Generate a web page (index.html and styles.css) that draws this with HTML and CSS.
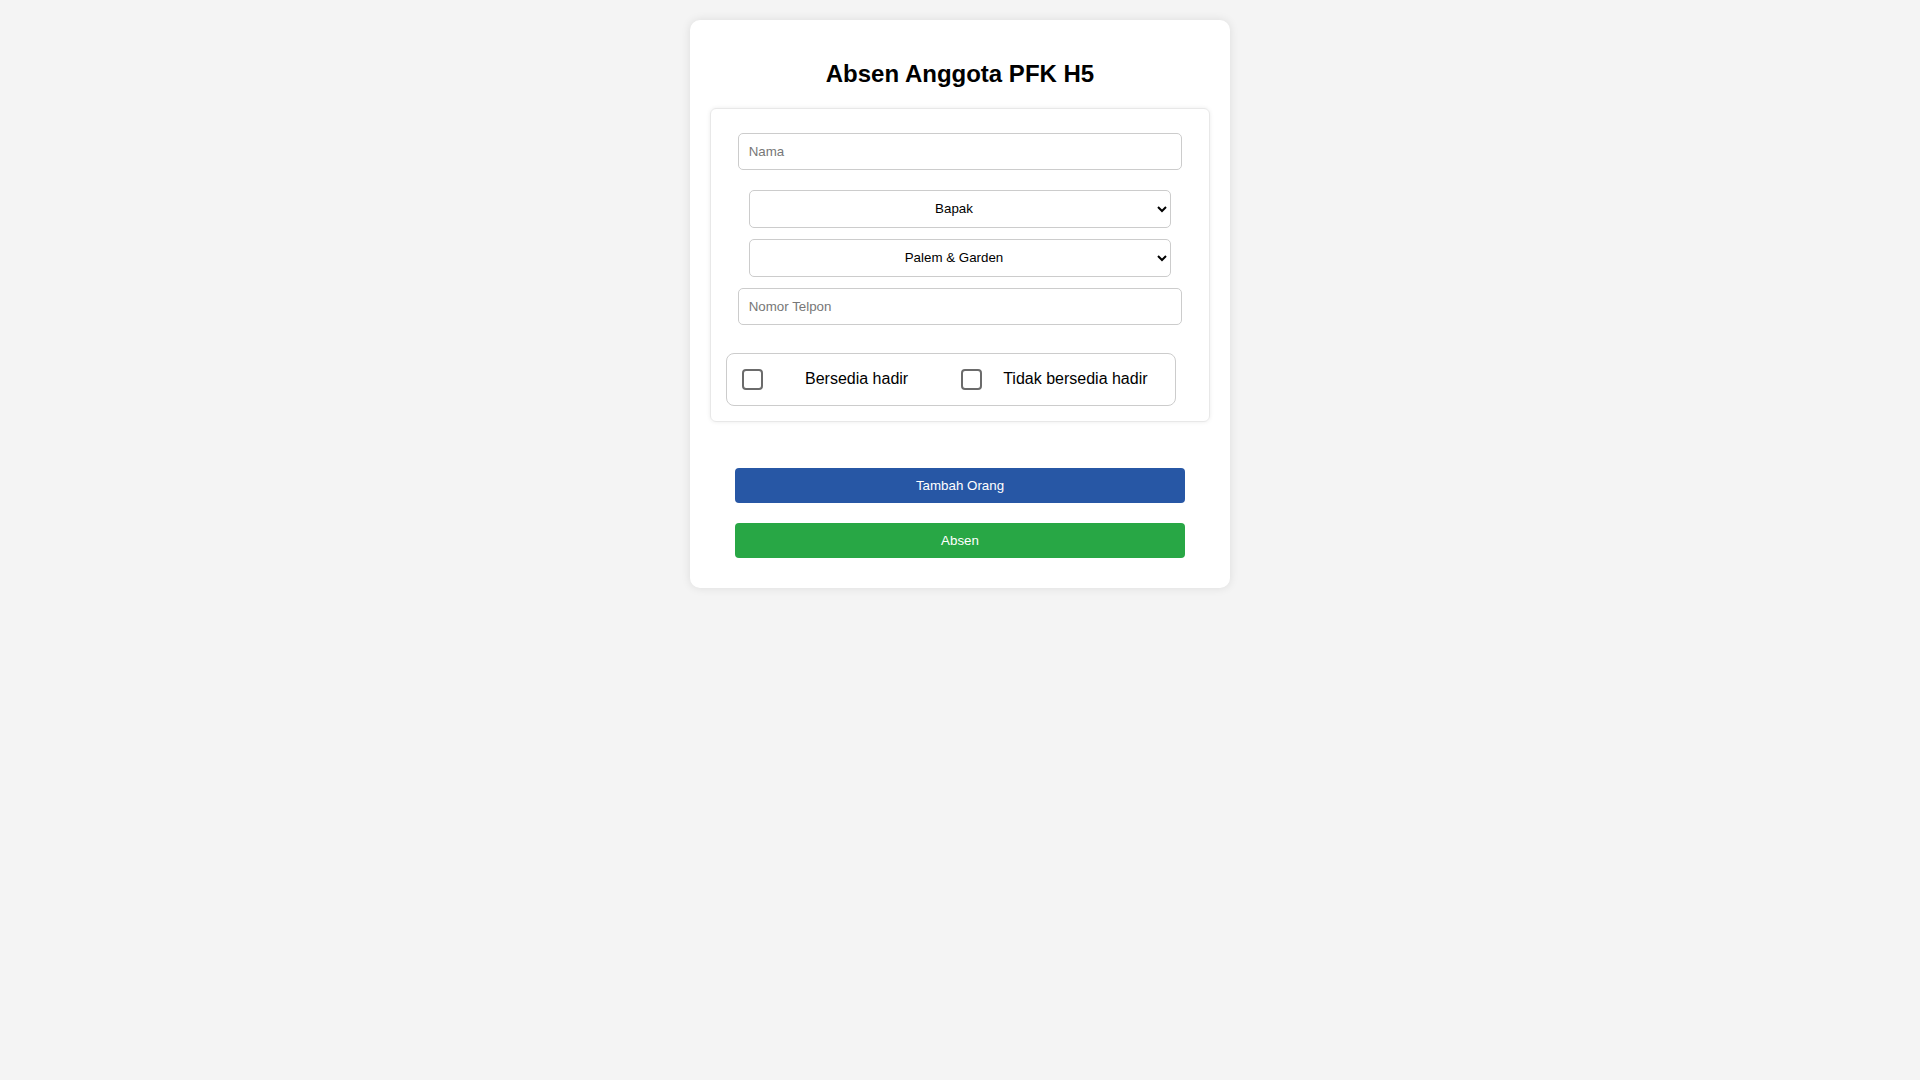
FILE: index.html
```html
<!DOCTYPE html>
<html lang="id">
<head>
    <meta charset="UTF-8">
    <meta name="viewport" content="width=device-width, initial-scale=1.0">
    <title>Absen Anggota PFK H5</title>
    <link rel="stylesheet" href="styles.css">
</head>
<body>

    <div class="container">
        <h2>Absen Anggota PFK H5</h2>

        <div class="person-box">
            <input type="text" class="field" placeholder="Nama">
            <div class="select-group">
                <select class="pick">
                    <option>Bapak</option>
                    <option>Ibu</option>
                </select>
                <select class="pick">
                    <option>Palem &amp; Garden</option>
                </select>
            </div>
            <input type="text" class="field field-phone" placeholder="Nomor Telpon">

            <div class="attend">
                <label class="opt opt-yes">
                    <input type="checkbox">
                    <span>Bersedia hadir</span>
                </label>
                <label class="opt opt-no">
                    <input type="checkbox">
                    <span>Tidak bersedia hadir</span>
                </label>
            </div>
        </div>

        <button type="button" class="btn btn-add">Tambah Orang</button>
        <button type="button" class="btn btn-submit">Absen</button>
    </div>

</body>
</html>
```

FILE: styles.css
```css
body {
    font-family: "Liberation Sans", Arial, sans-serif;
    background-color: #f4f4f4;
    margin: 0;
    padding: 20px 0;
}
.container {
    width: 500px;
    margin: 0 auto;
    padding: 20px;
    background-color: white;
    border-radius: 10px;
    box-shadow: 0 0 10px rgba(0, 0, 0, 0.1);
}
h2 {
    font-size: 24px;
    text-align: center;
    margin: 20px 0;
}
.person-box {
    border: 1px solid #e8e8e8;
    border-radius: 6px;
    box-shadow: 0 0 4px rgba(0, 0, 0, 0.08);
    padding: 15px;
}
.field {
    display: block;
    width: 95%;
    height: 36.5px;
    margin: 10px auto;
    padding: 0 10px;
    box-sizing: border-box;
    font-family: inherit;
    font-size: 13.33px;
    border: 1px solid #ccc;
    border-radius: 5px;
}
.field:first-child {
    margin-top: 9px;
    margin-bottom: 20px;
}
.field-phone {
    margin-top: 11px;
}
.field::placeholder {
    color: #777;
}
.select-group {
    margin: 0;
}
.pick {
    display: block;
    width: 90%;
    height: 38.5px;
    margin: 0 auto 10.5px;
    box-sizing: border-box;
    font-family: inherit;
    font-size: 13.33px;
    color: black;
    text-align: center;
    background-color: white;
    border: 1px solid #ccc;
    border-radius: 5px;
}
.attend {
    display: flex;
    align-items: center;
    width: 450px;
    box-sizing: border-box;
    margin-top: 28px;
    padding: 15px;
    border: 1px solid #ccc;
    border-radius: 8px;
}
.opt {
    display: flex;
    align-items: center;
    font-size: 16px;
}
.opt input {
    appearance: none;
    width: 21px;
    height: 21px;
    margin: 0;
    border: 2px solid #6b6b6b;
    border-radius: 4px;
    background: white;
}
.opt-yes span {
    margin-left: 42px;
}
.opt-no {
    margin-left: 53px;
}
.opt-no span {
    margin-left: 21px;
}
.btn {
    display: block;
    width: 90%;
    height: 35px;
    margin: 0 auto 20px;
    font-family: inherit;
    font-size: 13.33px;
    color: white;
    border: none;
    border-radius: 4px;
}
.btn-add {
    margin-top: 46px;
    background-color: #2757a5;
}
.btn-submit {
    background-color: #28a745;
    margin-bottom: 10px;
}
```
